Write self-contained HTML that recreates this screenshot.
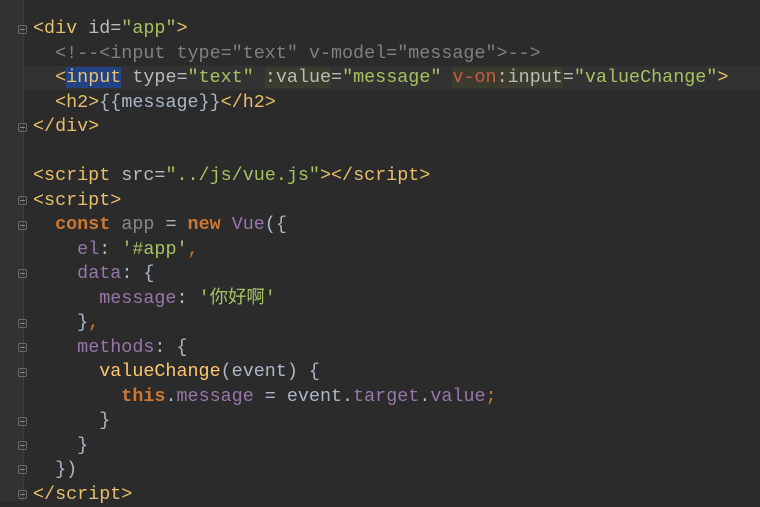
<!DOCTYPE html>
<html><head><meta charset="utf-8"><style>
body{margin:0;width:760px;height:501px;overflow:hidden;background:#2b2b2b;position:relative;font-family:"Liberation Mono","Noto Sans CJK SC",monospace;}
.gut{position:absolute;left:0;top:0;width:23px;height:501px;background:#303233;}
.gl{position:absolute;left:23px;top:0;width:1px;height:501px;background:#3c3e40;}
.cur{position:absolute;left:24px;top:66px;width:736px;height:24px;background:#323232;}
pre{position:absolute;left:33px;top:17px;margin:0;font-size:18.4px;line-height:24.5px;color:#a9b7c6;font-family:inherit;}
.t{color:#e8bf6a}.a{color:#bababa}.s{color:#a5c261}.c{color:#808080}.k{color:#cc7832;font-weight:bold}.p{color:#9876aa}.y{color:#ffc66d}
.sel{background:#214283}.hl{background:#3b3b2e}.r{color:#cc5a4a}
.f{position:absolute;left:18px;width:9px;height:9px;border:1px solid #6a6a6a;border-radius:2px;box-sizing:border-box;}
.f::after{content:"";position:absolute;left:1px;top:3px;width:5px;height:1px;background:#8a8a8a;}
</style></head><body>
<div class="gut"></div><div class="gl"></div><div class="cur"></div>
<div class="f" style="top:25px"></div>
<div class="f" style="top:123px"></div>
<div class="f" style="top:196px"></div>
<div class="f" style="top:221px"></div>
<div class="f" style="top:269px"></div>
<div class="f" style="top:319px"></div>
<div class="f" style="top:343px"></div>
<div class="f" style="top:368px"></div>
<div class="f" style="top:417px"></div>
<div class="f" style="top:441px"></div>
<div class="f" style="top:465px"></div>
<div class="f" style="top:490px"></div>
<pre><span class="t">&lt;div </span><span class="a">id=</span><span class="s">"app"</span><span class="t">&gt;</span>
  <span class="c">&lt;!--&lt;input type="text" v-model="message"&gt;--&gt;</span>
  <span class="t">&lt;<span class="sel">input</span> </span><span class="a">type=</span><span class="s">"text"</span> <span class="a hl">:value</span><span class="a">=</span><span class="s">"message"</span> <span class="hl"><span class="r">v-on</span><span class="a">:input</span></span><span class="a">=</span><span class="s">"valueChange"</span><span class="t">&gt;</span>
  <span class="t">&lt;h2&gt;</span>{{<span class="p" style="color:#a9b7c6">message</span>}}<span class="t">&lt;/h2&gt;</span>
<span class="t">&lt;/div&gt;</span>

<span class="t">&lt;script </span><span class="a">src=</span><span class="s">"../js/vue.js"</span><span class="t">&gt;&lt;/script&gt;</span>
<span class="t">&lt;script&gt;</span>
  <span class="k">const</span> <span style="color:#888">app</span> = <span class="k">new</span> <span class="p">Vue</span>({
    <span class="p">el</span>: <span class="s">'#app'</span><span class="k" style="font-weight:normal">,</span>
    <span class="p">data</span>: {
      <span class="p">message</span>: <span class="s">'你好啊'</span>
    }<span class="k" style="font-weight:normal">,</span>
    <span class="p">methods</span>: {
      <span class="y">valueChange</span>(event) {
        <span class="k">this</span>.<span class="p">message</span> = event.<span class="p">target</span>.<span class="p">value</span><span class="k" style="font-weight:normal">;</span>
      }
    }
  })
<span class="t">&lt;/script&gt;</span></pre>
</body></html>
